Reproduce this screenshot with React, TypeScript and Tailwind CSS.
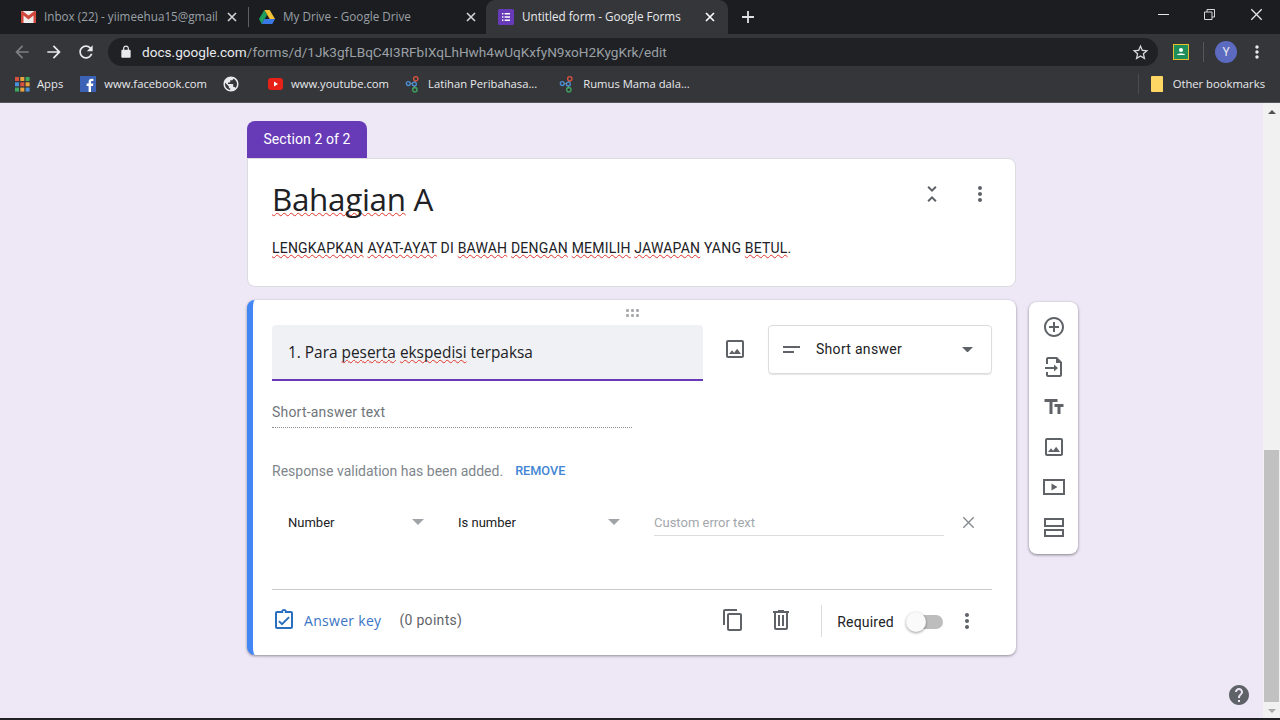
import React from "react";

const roboto = "font-['Roboto',sans-serif]";
const gsans = "font-['Open_Sans',sans-serif]";

function Icon({ d, size = 24, color = "#5f6368", className = "" }: { d: string; size?: number; color?: string; className?: string }) {
  return (
    <svg width={size} height={size} viewBox="0 0 24 24" className={className} fill={color}>
      <path d={d} />
    </svg>
  );
}

const P = {
  image: "M19 5v14H5V5h14m0-2H5c-1.1 0-2 .9-2 2v14c0 1.1.9 2 2 2h14c1.1 0 2-.9 2-2V5c0-1.1-.9-2-2-2zm-4.86 8.86l-3 3.87L9 13.14 6 17h12l-3.86-5.14z",
  add: "M13 7h-2v4H7v2h4v4h2v-4h4v-2h-4V7zm-1-5C6.48 2 2 6.48 2 12s4.48 10 10 10 10-4.48 10-10S17.52 2 12 2zm0 18c-4.41 0-8-3.59-8-8s3.59-8 8-8 8 3.59 8 8-3.59 8-8 8z",
  title: "M2.5 4v3h5v12h3V7h5V4h-13zm19 5h-9v3h3v7h3v-7h3V9z",
  copy: "M16 1H4c-1.1 0-2 .9-2 2v14h2V3h12V1zm3 4H8c-1.1 0-2 .9-2 2v14c0 1.1.9 2 2 2h11c1.1 0 2-.9 2-2V7c0-1.1-.9-2-2-2zm0 16H8V7h11v14z",
  trash: "M15 3V2H9v1H4v2h1v15c0 1.1.9 2 2 2h10c1.1 0 2-.9 2-2V5h1V3h-5zm2 17H7V5h10v15zM9 7h2v11H9V7zm4 0h2v11h-2V7z",
  more: "M12 8c1.1 0 2-.9 2-2s-.9-2-2-2-2 .9-2 2 .9 2 2 2zm0 2c-1.1 0-2 .9-2 2s.9 2 2 2 2-.9 2-2-.9-2-2-2zm0 6c-1.1 0-2 .9-2 2s.9 2 2 2 2-.9 2-2-.9-2-2-2z",
  collapse: "M7.41 18.59L8.83 20 12 16.83 15.17 20l1.41-1.41L12 14l-4.59 4.59zm9.18-13.18L15.17 4 12 7.17 8.83 4 7.41 5.41 12 10l4.59-4.59z",
  help: "M12 2C6.48 2 2 6.48 2 12s4.48 10 10 10 10-4.48 10-10S17.52 2 12 2zm1 17h-2v-2h2v2zm2.07-7.75l-.9.92C13.45 12.9 13 13.5 13 15h-2v-.5c0-1.1.45-2.1 1.17-2.83l1.24-1.26c.37-.36.59-.86.59-1.41 0-1.1-.9-2-2-2s-2 .9-2 2H8c0-2.21 1.79-4 4-4s4 1.79 4 4c0 .88-.36 1.68-.93 2.25z",
  importDoc: "M6 2h9l5 5v13c0 1.1-.9 2-2 2H6c-1.1 0-2-.9-2-2v-3h2v3h12V8h-4V4H6v5H4V4c0-1.1.9-2 2-2zM12 9.5l4 3.5-4 3.5V14H3v-2h9V9.5z",
  video: "M1 4h22v16H1zM3 6v12h18V6zM9.5 8.5v7l6-3.5z",
  section: "M2 3h20v9H2zM4 5v5h16V5zM2 14h20v8H2zM4 16v4h16v-4z",
  key: "M19 3h-4.18C14.4 1.84 13.3 1 12 1s-2.4.84-2.82 2H5c-1.1 0-2 .9-2 2v14c0 1.1.9 2 2 2h14c1.1 0 2-.9 2-2V5c0-1.1-.9-2-2-2zm-7 0c.55 0 1 .45 1 1s-.45 1-1 1-1-.45-1-1 .45-1 1-1zm7 16H5V5h14v14zm-2.6-10.6L10 14.8l-2.4-2.4L6.2 13.8 10 17.6l7.8-7.8-1.4-1.4z",
  star: "M22 9.24l-7.19-.62L12 2 9.19 8.63 2 9.24l5.46 4.73L5.82 21 12 17.27 18.18 21l-1.63-7.03L22 9.24zM12 15.4l-3.76 2.27 1-4.28-3.32-2.88 4.38-.38L12 6.1l1.71 4.04 4.38.38-3.32 2.88 1 4.28L12 15.4z",
  reload: "M17.65 6.35C16.2 4.9 14.21 4 12 4c-4.42 0-7.99 3.58-7.99 8s3.57 8 7.99 8c3.73 0 6.84-2.55 7.73-6h-2.08c-.82 2.33-3.04 4-5.65 4-3.31 0-6-2.69-6-6s2.69-6 6-6c1.66 0 3.14.69 4.22 1.78L13 11h7V4l-2.35 2.35z",
  arrow: "M12 4l-1.41 1.41L16.17 11H4v2h12.17l-5.58 5.59L12 20l8-8z",
  back: "M20 11H7.83l5.59-5.59L12 4l-8 8 8 8 1.41-1.41L7.83 13H20v-2z",
  lock: "M18 8h-1V6c0-2.76-2.24-5-5-5S7 3.24 7 6v2H6c-1.1 0-2 .9-2 2v10c0 1.1.9 2 2 2h12c1.1 0 2-.9 2-2V10c0-1.1-.9-2-2-2zM9 6c0-1.66 1.34-3 3-3s3 1.34 3 3v2H9V6z",
};

const X = ({ color = "#d5d6d8", size = 10, w = 1.6 }: { color?: string; size?: number; w?: number }) => (
  <svg width={size} height={size} viewBox="0 0 10 10" stroke={color} strokeWidth={w} fill="none">
    <path d="M1 1l8 8M9 1L1 9" />
  </svg>
);

const Gmail = () => (
  <svg width="15" height="12" viewBox="0 0 15 12">
    <rect width="15" height="12" rx="1" fill="#f1eded" />
    <path d="M0 1.5V12h2.5V4.5l5 4 5-4V12H15V1.5C15 .3 13.7-.3 12.8.4L7.5 4.6 2.2.4C1.3-.3 0 .3 0 1.5z" fill="#d0483d" />
  </svg>
);
const Drive = () => (
  <svg width="16" height="14" viewBox="0 0 16 14">
    <path d="M5.3 0h5.4l5.3 9h-5.3z" fill="#f4c233" />
    <path d="M5.3 0L0 9l2.7 5 5.3-9z" fill="#1d9e5f" />
    <path d="M5.4 9H16l-2.7 5H2.7z" fill="#3b78e7" />
  </svg>
);
const Forms = () => (
  <svg width="16" height="16" viewBox="0 0 16 16">
    <rect width="16" height="16" rx="1.5" fill="#673ab7" />
    <path d="M4 4h1.4v1.4H4zM6.6 4H12v1.4H6.6zM4 7.3h1.4v1.4H4zM6.6 7.3H12v1.4H6.6zM4 10.6h1.4V12H4zM6.6 10.6H12V12H6.6z" fill="#fff" />
  </svg>
);
const Nodes = () => (
  <svg width="15" height="18" viewBox="0 0 16 18" fill="none" strokeWidth="1.4">
    <circle cx="11.5" cy="3.5" r="2.3" stroke="#d9523f" />
    <circle cx="3.5" cy="8.5" r="2.1" stroke="#4a90d9" />
    <circle cx="10" cy="9" r="2.1" stroke="#4a90d9" />
    <circle cx="10.5" cy="15" r="2.3" stroke="#3fa860" />
    <path d="M5.5 8.5h2.5M10.5 5.5v1.5M10 11v1.5" stroke="#8a8f96" strokeWidth="1" />
  </svg>
);

function Tab({ icon, label, width, active, textW }: { icon: React.ReactNode; label: string; width: string; active?: boolean; textW: string }) {
  return (
    <div className={`${width} h-[34px] flex items-center shrink-0 ${active ? "bg-[#35363a] rounded-t-[9px]" : ""}`}>
      {icon}
      <span className={`${textW} whitespace-nowrap text-[11.7px] font-['Open_Sans',sans-serif] ${active ? "text-[#e8eaed]" : "text-[#9aa0a6]"}`}>{label}</span>
    </div>
  );
}

function Bm({ icon, label, gap = "gap-2" }: { icon: React.ReactNode; label: string; gap?: string }) {
  return (
    <div className={`flex items-center ${gap} shrink-0`}>
      {icon}
      <span className="text-[11.25px] text-[#e8eaed] font-['Open_Sans',sans-serif] whitespace-nowrap">{label}</span>
    </div>
  );
}

const S = ({ children }: { children: React.ReactNode }) => (
  <span className="underline decoration-wavy decoration-[#e0352b] decoration-1 underline-offset-[1px] [text-decoration-skip-ink:none]">{children}</span>
);

function Browser() {
  return (
    <div className="h-[103px] bg-[#35363a] shrink-0 flex flex-col border-b border-[#55565a]">
      <div className="h-[34px] bg-[#1c1d21] flex items-center relative">
        <div className="flex items-center pl-[21px]">
          <Tab width="w-[227px]" textW="w-[173px] ml-[8px]" icon={<Gmail />} label="Inbox (22) - yiimeehua15@gmail" />
          <div className="w-[1px] h-[20px] bg-[#5f6063]" />
        </div>
        <div className="absolute left-[227px] top-[12px]"><X /></div>
        <div className="ml-[10px]">
          <Tab width="w-[227px]" textW="w-[180px] ml-[8px]" icon={<Drive />} label="My Drive - Google Drive" />
        </div>
        <div className="absolute left-[466px] top-[12px]"><X /></div>
        <Tab width="w-[242px] pl-[12px]" textW="w-[190px] ml-[8px]" active icon={<Forms />} label="Untitled form - Google Forms" />
        <div className="absolute left-[705px] top-[12px]"><X color="#ffffff" /></div>
        <svg className="ml-[13px]" width="14" height="14" viewBox="0 0 14 14" stroke="#e0e1e3" strokeWidth="1.8"><path d="M7 1v12M1 7h12" /></svg>
        <div className="ml-auto flex items-center pr-[17px] gap-[35px] -mt-[6px]">
          <svg width="11" height="11" viewBox="0 0 11 11" stroke="#e6e6e6"><path d="M0 5.5h11" /></svg>
          <svg width="11" height="11" viewBox="0 0 11 11" stroke="#d8d8d8" fill="none"><path d="M.5 3h7.5v7.5H.5zM3 3V.5h7.5V8H8" /></svg>
          <X color="#e6e6e6" size={13} w={1} />
        </div>
      </div>
      <div className="h-[34px] pt-[2px] flex items-center">
        <Icon d={P.back} size={20} color="#7d7f83" className="ml-[12px]" />
        <Icon d={P.arrow} size={20} color="#e8eaed" className="ml-[12px]" />
        <Icon d={P.reload} size={20} color="#e8eaed" className="ml-[12px]" />
        <div className="ml-[12px] w-[1050px] h-[28px] rounded-full bg-[#202124] flex items-center">
          <Icon d={P.lock} size={14} color="#e8eaed" className="ml-[11px]" />
          <span className="ml-[9px] text-[13.6px] font-['Roboto',sans-serif] text-[#e8eaed] whitespace-nowrap">docs.google.com<span className="text-[#9aa0a6]">/forms/d/1Jk3gfLBqC4I3RFbIXqLhHwh4wUqKxfyN9xoH2KygKrk/edit</span></span>
          <Icon d={P.star} size={19} color="#d7d9dc" className="ml-auto mr-[8px]" />
        </div>
        <svg className="ml-[15px]" width="16" height="16" viewBox="0 0 16 16">
          <rect x=".5" y=".5" width="15" height="15" fill="#1e8e5a" stroke="#e6c02d" />
          <circle cx="8" cy="6" r="2" fill="#fff" />
          <path d="M4 11c0-2 8-2 8 0z" fill="#fff" />
        </svg>
        <div className="ml-[14px] w-[1px] h-[20px] bg-[#55565a]" />
        <div className="ml-[11px] w-[22px] h-[22px] rounded-full bg-[#5c6bc0] flex items-center justify-center text-[12px] text-[#e8eaed] font-['Roboto',sans-serif]">Y</div>
        <Icon d={P.more} size={20} color="#e8eaed" className="ml-[10px]" />
      </div>
      <div className="flex-1 flex items-center pl-[15px] pr-[15px] pb-[2px]">
        <Bm
          gap="gap-[7px]"
          icon={
            <svg width="15" height="15" viewBox="0 0 15 15">
              {[0, 5.3, 10.6].map((y, r) =>
                [0, 5.3, 10.6].map((x, c) => (
                  <rect key={`${r}${c}`} x={x} y={y} width="4" height="4" fill={["#d9503f", "#e8a33d", "#3fa860", "#4a90d9", "#d9503f", "#e8a33d", "#3fa860", "#e8a33d", "#4a90d9"][r * 3 + c]} />
                ))
              )}
            </svg>
          }
          label="Apps"
        />
        <div className="ml-[17px]">
          <Bm
            icon={
              <svg width="16" height="16" viewBox="0 0 16 16">
                <rect width="16" height="16" fill="#3b62b5" />
                <path d="M11 16v-6h2l.3-2.4H11V6.2c0-.7.2-1.2 1.2-1.2h1.2V2.9c-.6-.1-1.2-.1-1.8-.1-1.8 0-3 1.1-3 3.1v1.7H6.6V10h2v6z" fill="#fff" />
              </svg>
            }
            label="www.facebook.com"
          />
        </div>
        <svg className="ml-[15px]" width="18" height="18" viewBox="0 0 24 24" fill="#e8eaed">
          <path d="M12 2C6.48 2 2 6.48 2 12s4.48 10 10 10 10-4.48 10-10S17.52 2 12 2zm-1 17.93c-3.95-.49-7-3.85-7-7.93 0-.62.08-1.21.21-1.79L9 15v1c0 1.1.9 2 2 2v1.93zm6.9-2.54c-.26-.81-1-1.39-1.9-1.39h-1v-3c0-.55-.45-1-1-1H8v-2h2c.55 0 1-.45 1-1V7h2c1.1 0 2-.9 2-2v-.41c2.93 1.19 5 4.06 5 7.41 0 2.08-.8 3.97-2.1 5.39z" />
        </svg>
        <div className="ml-[28px]">
          <Bm
            gap="gap-[8px]"
            icon={
              <svg width="15" height="12" viewBox="0 0 15 12">
                <rect width="15" height="12" rx="3" fill="#e62117" />
                <path d="M6 3.5v5l4-2.5z" fill="#fff" />
              </svg>
            }
            label="www.youtube.com"
          />
        </div>
        <div className="ml-[16px]"><Bm gap="gap-[8px]" icon={<Nodes />} label="Latihan Peribahasa..." /></div>
        <div className="ml-[22px]"><Bm gap="gap-[9px]" icon={<Nodes />} label="Rumus Mama dala..." /></div>
        <div className="ml-auto w-[1px] h-[20px] bg-[#4a4b4f]" />
        <div className="ml-[12px]">
          <Bm
            gap="gap-[10px]"
            icon={
              <svg width="12" height="16" viewBox="0 0 12 16">
                <path d="M1 0h10a1 1 0 011 1v15H1a1 1 0 01-1-1V1a1 1 0 011-1z" fill="#fdd663" />
              </svg>
            }
            label="Other bookmarks"
          />
        </div>
      </div>
    </div>
  );
}

function Caret({ color = "#5f6368", w = 10 }: { color?: string; w?: number }) {
  return (
    <svg width={w} height={w / 2} viewBox="0 0 10 5" fill={color}>
      <path d="M0 0h10L5 5z" />
    </svg>
  );
}

function HeaderCard() {
  return (
    <div className="h-[129px] bg-white rounded-b-lg rounded-tr-lg border border-[#dadce0] pl-[24px] pr-[24px] flex flex-col">
      <div className="flex items-center h-[80px]">
        <h1 className={`text-[31.4px] leading-none text-[#202124] ${gsans} tracking-[-0.3px]`}>
          <S>Bahagian</S> A
        </h1>
        <Icon d={P.collapse} size={24} color="#5f6368" className="ml-auto mr-[24px] -mt-[10px]" />
        <Icon d={P.more} size={24} color="#5f6368" className="-mt-[10px] mr-[-1px]" />
      </div>
      <p className={`${roboto} text-[14px] leading-[20px] text-[#202124] mt-[-1px] tracking-[0.2px]`}>
        <S>LENGKAPKAN</S> <S>AYAT-AYAT</S> DI <S>BAWAH</S> <S>DENGAN</S> <S>MEMILIH</S> <S>JAWAPAN</S> YANG <S>BETUL</S>.
      </p>
    </div>
  );
}

function QuestionCard() {
  return (
    <div className="h-[355px] mt-[13px] bg-white rounded-lg border-l-[6px] border-[#4285f4] shadow-[0_1px_3px_rgba(0,0,0,0.4)] pl-[19px] pr-[24px] relative">
      <div className="absolute left-[372px] top-[8px]">
        <svg width="16" height="10" viewBox="0 0 16 10" fill="#a9abae">
          {[1, 6, 11].map((x) => [1, 6].map((y) => <rect key={`${x}${y}`} x={x} y={y} width="3" height="3" rx="1" />))}
        </svg>
      </div>
      <div className="flex pt-[25px]">
        <div className={`w-[431px] h-[56px] bg-[#f0f1f4] border-b-2 border-[#673ab7] rounded-t pl-[16px] pt-[2px] flex items-center text-[15.4px] text-[#202124] ${gsans}`}>
          <span>
            1. Para <S>peserta</S> <S>ekspedisi</S> terpaksa
          </span>
        </div>
        <Icon d={P.image} size={24} className="ml-[20px] mt-[12px]" />
        <div className={`ml-[21px] w-[224px] h-[49px] rounded border border-[#dadce0] shadow-[0_1px_1px_rgba(0,0,0,0.1)] flex items-center pl-[14px] pr-[18px] text-[14px] text-[#202124] ${roboto} tracking-[0.3px]`}>
          <svg width="18" height="10" viewBox="0 0 18 10" fill="#5f6368"><path d="M0 1h17v2H0zM0 6h11v2H0z" /></svg>
          <span className="ml-[15px]">Short answer</span>
          <span className="ml-auto"><Caret w={11} /></span>
        </div>
      </div>
      <div className={`mt-[21px] w-[360px] h-[26px] border-b border-dotted border-[#8a8d91] text-[14px] leading-[20px] text-[#70757a] ${roboto} tracking-[0.2px]`}>Short-answer text</div>
      <div className={`mt-[33px] flex items-center h-[20px] text-[14px] ${roboto}`}>
        <span className="text-[#80868b]">Response validation has been added.</span>
        <span className="ml-[12px] text-[#4285d4] text-[12.7px] font-medium">REMOVE</span>
      </div>
      <div className={`mt-[24px] flex items-center h-[34px] text-[13px] text-[#202124] ${roboto}`}>
        <span className="ml-[16px] w-[124px] pt-[2px]">Number</span>
        <Caret color="#a0a3a7" w={12} />
        <span className="ml-[34px] w-[150px] pt-[2px]">Is number</span>
        <Caret color="#a0a3a7" w={12} />
        <div className="ml-[34px] w-[290px] h-[28px] pt-[2px] border-b border-[#dadce0] flex items-center text-[#a3a7ab]">Custom error text</div>
        <span className="ml-[18px]"><X color="#80868b" size={13} w={1} /></span>
      </div>
      <div className="mt-[50px] border-t border-[#c8cacc]" />
      <div className="flex items-center h-[60px]">
        <Icon d={P.key} size={24} color="#2a6fbf" />
        <span className={`ml-[8px] text-[14px] font-medium text-[#3a75c4] ${gsans} tracking-[0.3px]`}>Answer key</span>
        <span className={`ml-[18px] text-[14px] text-[#5f6368] ${roboto} tracking-[0.3px]`}>(0 points)</span>
        <Icon d={P.copy} size={24} className="ml-[259px]" />
        <Icon d={P.trash} size={24} className="ml-[24px]" />
        <div className="ml-[28px] mt-[2px] w-[1px] h-[32px] bg-[#dadce0]" />
        <span className={`ml-[15px] mt-[4px] text-[14px] text-[#202124] ${roboto} tracking-[0.2px]`}>Required</span>
        <div className="ml-[12px] mt-[4px] w-[37px] h-[14px] relative">
          <div className="ml-[9px] w-[28px] h-[14px] rounded-full bg-[#bdbdbd]" />
          <div className="absolute left-0 -top-[3px] w-[20px] h-[20px] rounded-full bg-[#fafafa] shadow-[0_1px_3px_rgba(0,0,0,0.4)]" />
        </div>
        <Icon d={P.more} size={24} className="ml-[12px] mt-[2px]" />
      </div>
    </div>
  );
}

function Sidebar() {
  const items = [P.add, P.importDoc, P.title, P.image, P.video, P.section];
  return (
    <div className="ml-[13px] mt-[181px] w-[49px] h-[252px] bg-white rounded-lg shadow-[0_1px_3px_rgba(0,0,0,0.45)] flex flex-col items-center pt-[5px]">
      {items.map((d, i) => (
        <div key={i} className="h-[40px] flex items-center justify-center">
          <Icon d={d} size={24} />
        </div>
      ))}
    </div>
  );
}

function Scrollbar() {
  return (
    <div className="w-[17px] bg-[#f1f1f1] shrink-0 flex flex-col items-center">
      <div className="h-[17px] flex items-center justify-center"><svg width="8" height="4" viewBox="0 0 8 4" fill="#505050"><path d="M0 4h8L4 0z" /></svg></div>
      <div className="h-[330px]" />
      <div className="w-[15px] h-[252px] bg-[#c1c1c1]" />
      <div className="flex-1" />
      <div className="h-[15px] flex items-center justify-center"><svg width="8" height="4" viewBox="0 0 8 4" fill="#a8a8a8"><path d="M0 0h8L4 4z" /></svg></div>
    </div>
  );
}

export default function App() {
  return (
    <div className="w-[1280px] h-[720px] overflow-hidden flex flex-col bg-[#ede7f6]">
      <Browser />
      <div className="flex-1 flex relative min-h-0">
        <div className="flex-1 flex pl-[247px] pt-[18px]">
          <div className="w-[769px]">
            <div className={`w-[120px] h-[37px] bg-[#673ab7] rounded-t-lg text-white text-[14px] tracking-[0.1px] flex items-center justify-center ${roboto}`}>Section 2 of 2</div>
            <HeaderCard />
            <QuestionCard />
          </div>
          <Sidebar />
        </div>
        <Scrollbar />
        <div className="absolute left-[1227px] top-[580px]">
          <Icon d={P.help} size={24} color="#5f6368" />
        </div>
      </div>
      <div className="h-[2px] bg-[#202124] shrink-0" />
    </div>
  );
}
